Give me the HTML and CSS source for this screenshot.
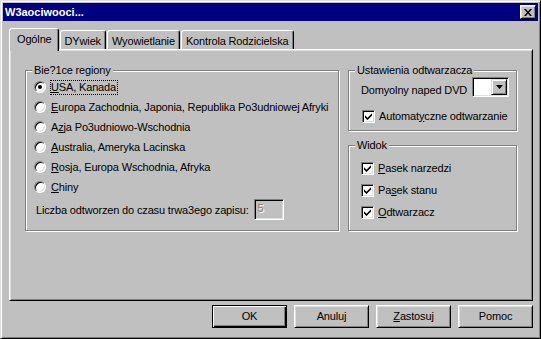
FILE: index.html
```html
<!DOCTYPE html>
<html lang="pl">
<head>
  <meta charset="UTF-8">
  <title>W3aociwooci...</title>
  <link rel="stylesheet" href="styles.css">
</head>
<body>
  <div class="window">
    <!-- Title bar -->
    <div class="titlebar">
      <span class="title">W3aociwooci...</span>
      <div class="close-btn">
        <svg width="8" height="7" viewBox="0 0 8 7"><path d="M0 0h2l2 2.5 2-2.5h2l-3 3.5 3 3.5h-2l-2-2.5-2 2.5h-2l3-3.5z" fill="#000"/></svg>
      </div>
    </div>

    <!-- Tabs -->
    <div class="tabs">
      <div class="tab active">Ogólne</div>
      <div class="tab">DYwiek</div>
      <div class="tab">Wyowietlanie</div>
      <div class="tab">Kontrola Rodzicielska</div>
    </div>

    <div class="panel">
      <div class="group regions">
        <div class="group-title">Bie?1ce regiony</div>
        <div class="option"><span class="radio checked"></span><span class="label focused"><u>U</u>SA, Kanada</span></div>
        <div class="option"><span class="radio"></span><span class="label"><u>E</u>uropa Zachodnia, Japonia, Republika Po3udniowej Afryki</span></div>
        <div class="option"><span class="radio"></span><span class="label">A<u>z</u>ja Po3udniowo-Wschodnia</span></div>
        <div class="option"><span class="radio"></span><span class="label"><u>A</u>ustralia, Ameryka Lacinska</span></div>
        <div class="option"><span class="radio"></span><span class="label"><u>R</u>osja, Europa Wschodnia, Afryka</span></div>
        <div class="option"><span class="radio"></span><span class="label"><u>C</u>hiny</span></div>
        <div class="count-row">
          <span>Liczba odtworzen do czasu trwa3ego zapisu:</span>
          <span class="field disabled">5</span>
        </div>
      </div>

      <div class="side">
        <div class="group player">
          <div class="group-title">Ustawienia odtwarzacza</div>
          <div class="drive-row">
            <span class="drive-label">Domyolny naped DVD</span>
            <span class="combo">
              <span class="combo-btn">
                <svg width="7" height="4" viewBox="0 0 7 4"><path d="M0 0h7l-3.5 4z" fill="#000"/></svg>
              </span>
            </span>
          </div>
          <div class="option check-row first">
            <span class="checkbox"><svg width="7" height="7" viewBox="0 0 7 7"><path d="M0 2.2l2.5 2.5 4.5-4.5v2.4l-4.5 4.5-2.5-2.5z" fill="#000"/></svg></span>
            <span class="label">Automat<u>y</u>czne odtwarzanie</span>
          </div>
        </div>

        <div class="group view">
          <div class="group-title">Widok</div>
          <div class="option check-row first">
            <span class="checkbox"><svg width="7" height="7" viewBox="0 0 7 7"><path d="M0 2.2l2.5 2.5 4.5-4.5v2.4l-4.5 4.5-2.5-2.5z" fill="#000"/></svg></span>
            <span class="label"><u>P</u>asek narzedzi</span>
          </div>
          <div class="option check-row">
            <span class="checkbox"><svg width="7" height="7" viewBox="0 0 7 7"><path d="M0 2.2l2.5 2.5 4.5-4.5v2.4l-4.5 4.5-2.5-2.5z" fill="#000"/></svg></span>
            <span class="label">Pa<u>s</u>ek stanu</span>
          </div>
          <div class="option check-row">
            <span class="checkbox"><svg width="7" height="7" viewBox="0 0 7 7"><path d="M0 2.2l2.5 2.5 4.5-4.5v2.4l-4.5 4.5-2.5-2.5z" fill="#000"/></svg></span>
            <span class="label"><u>O</u>dtwarzacz</span>
          </div>
        </div>
      </div>
    </div>

    <!-- Dialog buttons -->
    <div class="buttons">
      <div class="btn default">OK</div>
      <div class="btn">Anuluj</div>
      <div class="btn"><span><u>Z</u>astosuj</span></div>
      <div class="btn">Pomoc</div>
    </div>
  </div>
</body>
</html>
```

FILE: styles.css
```css
* {
  margin: 0;
  padding: 0;
  box-sizing: border-box;
}

body {
  font-family: "Liberation Sans", Arial, sans-serif;
  font-size: 11px;
  letter-spacing: -0.15px;
  color: #000;
  background: #c0c0c0;
}

u {
  text-decoration: underline;
  text-underline-offset: 1px;
}

.window {
  width: 541px;
  height: 339px;
  display: flex;
  flex-direction: column;
  padding: 2px;
  background: #c0c0c0;
  border: 1px solid;
  border-color: #dfdfdf #000 #000 #dfdfdf;
  box-shadow: inset 1px 1px #fff, inset -1px -1px #808080;
}

/* Title bar */
.titlebar {
  height: 18px;
  flex: none;
  display: flex;
  align-items: center;
  justify-content: space-between;
  padding: 0 2px;
  background: #000080;
}

.title {
  color: #fff;
  font-weight: bold;
  letter-spacing: 0;
  line-height: 18px;
}

.close-btn {
  width: 16px;
  height: 14px;
  display: flex;
  align-items: center;
  justify-content: center;
  background: #c0c0c0;
  border: 1px solid;
  border-color: #fff #000 #000 #fff;
  box-shadow: inset 1px 1px #dfdfdf, inset -1px -1px #808080;
}

/* Tabs */
.tabs {
  height: 21px;
  flex: none;
  margin-top: 7px;
  padding-left: 8px;
  display: flex;
  align-items: flex-end;
}

.tab {
  height: 19px;
  padding: 3px 4px 0;
  margin-left: 1px;
  line-height: 14px;
  white-space: nowrap;
  background: #c0c0c0;
  border: 1px solid;
  border-bottom: 0;
  border-color: #fff #000 #000 #fff;
  border-radius: 3px 3px 0 0;
  box-shadow: inset -1px 0 #808080;
}

.tab.active {
  position: relative;
  z-index: 1;
  height: 23px;
  padding: 3px 6px 0 7px;
  margin: 0 0 -2px -2px;
}

/* Tab page */
.panel {
  height: 252px;
  flex: none;
  margin: 0 5px 0 6px;
  padding: 20px 15px 0;
  display: flex;
  align-items: flex-start;
  border: 1px solid;
  border-color: #fff #000 #000 #fff;
  box-shadow: inset 1px 1px #dfdfdf, inset -1px -1px #808080;
}

.group {
  border: 1px solid #808080;
  box-shadow: inset 1px 1px #fff, 1px 1px #fff;
}

.group-title {
  width: fit-content;
  margin: -7px 0 0 6px;
  padding: 0 2px;
  line-height: 13px;
  background: #c0c0c0;
}

.regions {
  width: 314px;
  height: 161px;
  flex: none;
}

.side {
  width: 169px;
  flex: none;
  margin-left: 9px;
  display: flex;
  flex-direction: column;
  gap: 14px;
}

.player {
  height: 61px;
}

.view {
  height: 86px;
}

.option {
  height: 20px;
  display: flex;
  align-items: center;
  padding-left: 8px;
}

.label {
  margin-left: 4px;
  padding-right: 1px;
  line-height: 13px;
  white-space: nowrap;
  border: 1px solid transparent;
}

.label.focused {
  border: 1px dotted #000;
}

.radio {
  width: 12px;
  height: 12px;
  flex: none;
  display: flex;
  align-items: center;
  justify-content: center;
  border-radius: 50%;
  background: #fff;
  border: 1px solid;
  border-color: #808080 #fff #fff #808080;
  box-shadow: inset 1px 1px #000, inset -1px -1px #dfdfdf;
}

.radio.checked::after {
  content: "";
  width: 4px;
  height: 4px;
  border-radius: 50%;
  background: #000;
}

.count-row {
  height: 21px;
  margin-top: 2px;
  padding-left: 10px;
  display: flex;
  align-items: center;
}

.field {
  width: 30px;
  height: 21px;
  margin-left: 5px;
  padding-left: 3px;
  line-height: 17px;
  border: 1px solid;
  border-color: #808080 #fff #fff #808080;
  box-shadow: inset 1px 1px #000, inset -1px -1px #dfdfdf;
}

.field.disabled {
  background: #c0c0c0;
  color: #808080;
  text-shadow: 1px 1px #fff;
}

/* Player settings */
.drive-row {
  height: 20px;
  display: flex;
  padding-left: 12px;
}

.drive-label {
  align-self: flex-end;
  line-height: 13px;
}

.combo {
  width: 37px;
  height: 20px;
  margin: 0 7px 0 auto;
  padding: 1px;
  display: flex;
  justify-content: flex-end;
  background: #fff;
  border: 1px solid;
  border-color: #808080 #fff #fff #808080;
  box-shadow: inset 1px 1px #000, inset -1px -1px #dfdfdf;
}

.combo-btn {
  width: 16px;
  height: 16px;
  display: flex;
  align-items: center;
  justify-content: center;
  background: #c0c0c0;
  border: 1px solid;
  border-color: #dfdfdf #000 #000 #dfdfdf;
  box-shadow: inset 1px 1px #fff, inset -1px -1px #808080;
}

.check-row {
  padding-left: 12px;
  margin-top: 2px;
}

.player .check-row.first {
  margin-top: 9px;
  padding-left: 13px;
}

.view .check-row.first {
  margin-top: 6px;
}

.check-row .label {
  margin-left: 3px;
}

.checkbox {
  width: 13px;
  height: 13px;
  flex: none;
  display: flex;
  align-items: center;
  justify-content: center;
  background: #fff;
  border: 1px solid;
  border-color: #808080 #fff #fff #808080;
  box-shadow: inset 1px 1px #000, inset -1px -1px #dfdfdf;
}

/* Bottom buttons */
.buttons {
  flex: none;
  margin-top: 4px;
  padding-right: 5px;
  display: flex;
  justify-content: flex-end;
  gap: 7px;
}

.btn {
  width: 75px;
  height: 23px;
  display: flex;
  align-items: center;
  justify-content: center;
  line-height: 13px;
  background: #c0c0c0;
  border: 1px solid;
  border-color: #fff #000 #000 #fff;
  box-shadow: inset 1px 1px #dfdfdf, inset -1px -1px #808080;
}

.btn.default {
  border-color: #000;
  box-shadow: inset 1px 1px #fff, inset -1px -1px #000, inset -2px -2px #808080;
}
```
